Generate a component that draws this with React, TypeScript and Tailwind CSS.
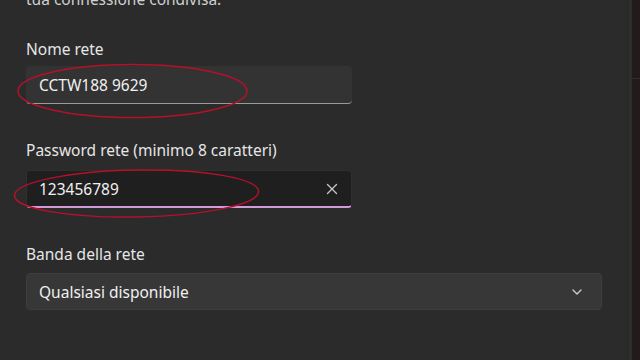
import React from "react";

export default function App() {
  const font = { fontFamily: '"Noto Sans", "Open Sans", sans-serif' };
  return (
    <div className="relative w-[640px] h-[360px] overflow-hidden bg-[#2b2b2b] flex" style={font}>
      <div className="w-[627px] h-full flex flex-col pl-[26px] text-[#e6e6e6] text-[15.5px] leading-[20px]">
        <div className="mt-[-11px] h-[20px] text-[#d0d0d0]">tua connessione condivisa.</div>
        <div className="mt-[30px] h-[20px]">Nome rete</div>
        <div className="mt-[7px] w-[326px] h-[38px] rounded-[4px] bg-[#333333] border-b border-[#9a9a9a] flex items-center pl-[13px] text-[#f0f0f0]">
          CCTW188 9629
        </div>
        <div className="mt-[36px] h-[20px]">Password rete (minimo 8 caratteri)</div>
        <div className="mt-[10px] w-[326px] h-[38px] rounded-[4px] bg-[#1f1f1f] border border-[#2f2f2f] border-b-2 border-b-[#d29ad8] flex items-center pl-[12px] pr-[10px] text-[#f0f0f0]">
          <span className="flex-1">123456789</span>
          <svg width="12" height="12" viewBox="0 0 12 12" className="mr-[3px]">
            <path d="M1.5 1.5 L10.5 10.5 M10.5 1.5 L1.5 10.5" stroke="#c8c8c8" strokeWidth="1.3" strokeLinecap="round" />
          </svg>
        </div>
        <div className="mt-[36px] h-[20px]">Banda della rete</div>
        <div className="mt-[9px] w-[576px] h-[37px] rounded-[4px] bg-[#373737] border border-[#3d3d3d] flex items-center pl-[12px] pr-[18px] text-[#f0f0f0]">
          <span className="flex-1">Qualsiasi disponibile</span>
          <svg width="12" height="8" viewBox="0 0 12 8">
            <path d="M2 2 L6 6 L10 2" stroke="#d0d0d0" strokeWidth="1.3" fill="none" strokeLinecap="round" strokeLinejoin="round" />
          </svg>
        </div>
      </div>
      <div className="w-[5px] h-full bg-[#2d2d2d] border-l border-[#262626]" />
      <div className="flex-1 h-full bg-[#231a1b] flex flex-col">
        <div className="h-[78px]" />
        <div className="h-[1px] bg-[#3a2a2c]" />
      </div>
      <svg className="absolute left-0 top-0 pointer-events-none" width="640" height="360">
        <ellipse cx="132.5" cy="91" rx="114.5" ry="26.5" fill="none" stroke="#b5112b" strokeWidth="1.5" />
        <ellipse cx="136.5" cy="193.5" rx="122" ry="23.5" fill="none" stroke="#b5112b" strokeWidth="1.5" transform="rotate(-1 136.5 193.5)" />
      </svg>
    </div>
  );
}
